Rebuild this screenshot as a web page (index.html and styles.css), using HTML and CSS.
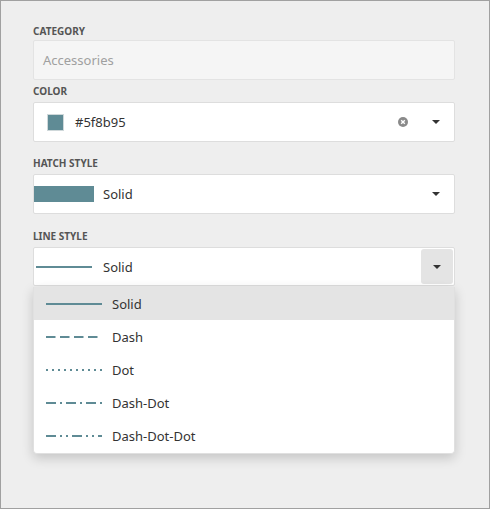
FILE: index.html
```html
<!DOCTYPE html>
<html>
  <head>
    <meta http-equiv="Content-Type" content="text/html; charset=utf-8" />
    <title>Line style editor</title>
    <link rel="stylesheet" href="styles.css">
  </head>
  <body>
    <div class="frame">
      <div class="form">
        <div class="field field-category">
          <div class="label">Category</div>
          <div class="box disabled">
            <span class="value muted">Accessories</span>
          </div>
        </div>
        <div class="field field-color">
          <div class="label">Color</div>
          <div class="box">
            <span class="swatch"></span>
            <span class="value">#5f8b95</span>
            <span class="clear">
              <svg width="10" height="10" viewBox="0 0 10 10">
                <circle cx="5" cy="5" r="5" fill="#8a8a8a" />
                <path d="M3.2 3.2 L6.8 6.8 M6.8 3.2 L3.2 6.8" stroke="#fff" stroke-width="1.4" />
              </svg>
            </span>
            <span class="arrow"></span>
          </div>
        </div>
        <div class="field field-hatch">
          <div class="label">Hatch style</div>
          <div class="box">
            <span class="hatch"></span>
            <span class="value">Solid</span>
            <span class="arrow"></span>
          </div>
        </div>
        <div class="field field-line">
          <div class="label">Line style</div>
          <div class="box open">
            <svg class="line-icon" width="56" height="4" viewBox="0 0 56 4">
              <line x1="0" y1="2" x2="56" y2="2" stroke="#5f8b95" stroke-width="2" />
            </svg>
            <span class="value">Solid</span>
            <span class="button"><span class="arrow"></span></span>
          </div>
          <div class="dropdown">
            <div class="item selected">
              <svg width="56" height="4" viewBox="0 0 56 4">
                <line x1="0" y1="2" x2="56" y2="2" stroke="#5f8b95" stroke-width="2" />
              </svg>
              <span>Solid</span>
            </div>
            <div class="item">
              <svg width="56" height="4" viewBox="0 0 56 4">
                <line x1="0" y1="2" x2="56" y2="2" stroke="#5f8b95" stroke-width="2" stroke-dasharray="9.5 4.5" />
              </svg>
              <span>Dash</span>
            </div>
            <div class="item">
              <svg width="56" height="4" viewBox="0 0 56 4">
                <line x1="0" y1="2" x2="56" y2="2" stroke="#5f8b95" stroke-width="2" stroke-dasharray="2 4" />
              </svg>
              <span>Dot</span>
            </div>
            <div class="item">
              <svg width="56" height="4" viewBox="0 0 56 4">
                <line x1="0" y1="2" x2="56" y2="2" stroke="#5f8b95" stroke-width="2" stroke-dasharray="10 4 2 4" />
              </svg>
              <span>Dash-Dot</span>
            </div>
            <div class="item">
              <svg width="56" height="4" viewBox="0 0 56 4">
                <line x1="0" y1="2" x2="56" y2="2" stroke="#5f8b95" stroke-width="2" stroke-dasharray="10 4 2 4 2 4" />
              </svg>
              <span>Dash-Dot-Dot</span>
            </div>
          </div>
        </div>
      </div>
    </div>
  </body>
</html>
```

FILE: styles.css
```css
html, body {
  margin: 0;
  padding: 0;
}
body {
  font-family: "Noto Sans", "Open Sans", sans-serif;
  font-size: 13px;
  color: #333;
}
.frame {
  box-sizing: border-box;
  width: 490px;
  height: 509px;
  border: 1px solid #a0a0a0;
  background: #eeeeee;
  padding: 23px 0 0 32px;
}
.form {
  width: 422px;
}
.field {
  display: flex;
  flex-direction: column;
}
.field-category {
  margin-bottom: 4px;
}
.field-color {
  margin-bottom: 14px;
}
.field-hatch {
  margin-bottom: 15px;
}
.label {
  font-size: 10px;
  font-weight: 700;
  line-height: 14px;
  color: #555;
  text-transform: uppercase;
  margin-bottom: 4px;
}
.field-category .label {
  margin-bottom: 2px;
}
.box {
  box-sizing: border-box;
  height: 40px;
  display: flex;
  align-items: center;
  background: #fff;
  border: 1px solid #dddddd;
  border-radius: 2px;
  padding: 0 0 0 13px;
}
.box.disabled {
  background: #f5f5f5;
  border-color: #e3e3e3;
  padding-left: 9px;
}
.value {
  flex: 1;
}
.muted {
  color: #a0a0a0;
}
.swatch {
  width: 15px;
  height: 15px;
  background: #5f8b95;
  border: 1px solid #cfd8da;
  margin-right: 11px;
}
.clear {
  display: flex;
  margin-right: 24px;
}
.arrow {
  width: 0;
  height: 0;
  border-left: 4px solid transparent;
  border-right: 4px solid transparent;
  border-top: 4px solid #333;
  margin-right: 14px;
}
.field-hatch .box {
  padding-left: 0;
}
.hatch {
  width: 60px;
  height: 16px;
  background: #5f8b95;
  margin-right: 9px;
}
.box.open {
  height: 39px;
  padding-left: 2px;
  padding-right: 1px;
}
.line-icon {
  margin-right: 11px;
}
.button {
  width: 32px;
  height: 35px;
  background: #e4e4e4;
  border-radius: 3px;
  display: flex;
  align-items: center;
  justify-content: center;
}
.button .arrow {
  margin-right: 0;
}
.dropdown {
  margin-top: 1px;
  background: #fff;
  border: 1px solid #e0e0e0;
  border-top: none;
  border-radius: 0 0 4px 4px;
  box-shadow: 0 4px 12px rgba(0, 0, 0, 0.18);
  padding-bottom: 1px;
}
.item {
  height: 33px;
  display: flex;
  align-items: center;
  padding-left: 12px;
}
.item svg {
  margin-right: 10px;
}
.item.selected {
  background: #e4e4e4;
}
```
